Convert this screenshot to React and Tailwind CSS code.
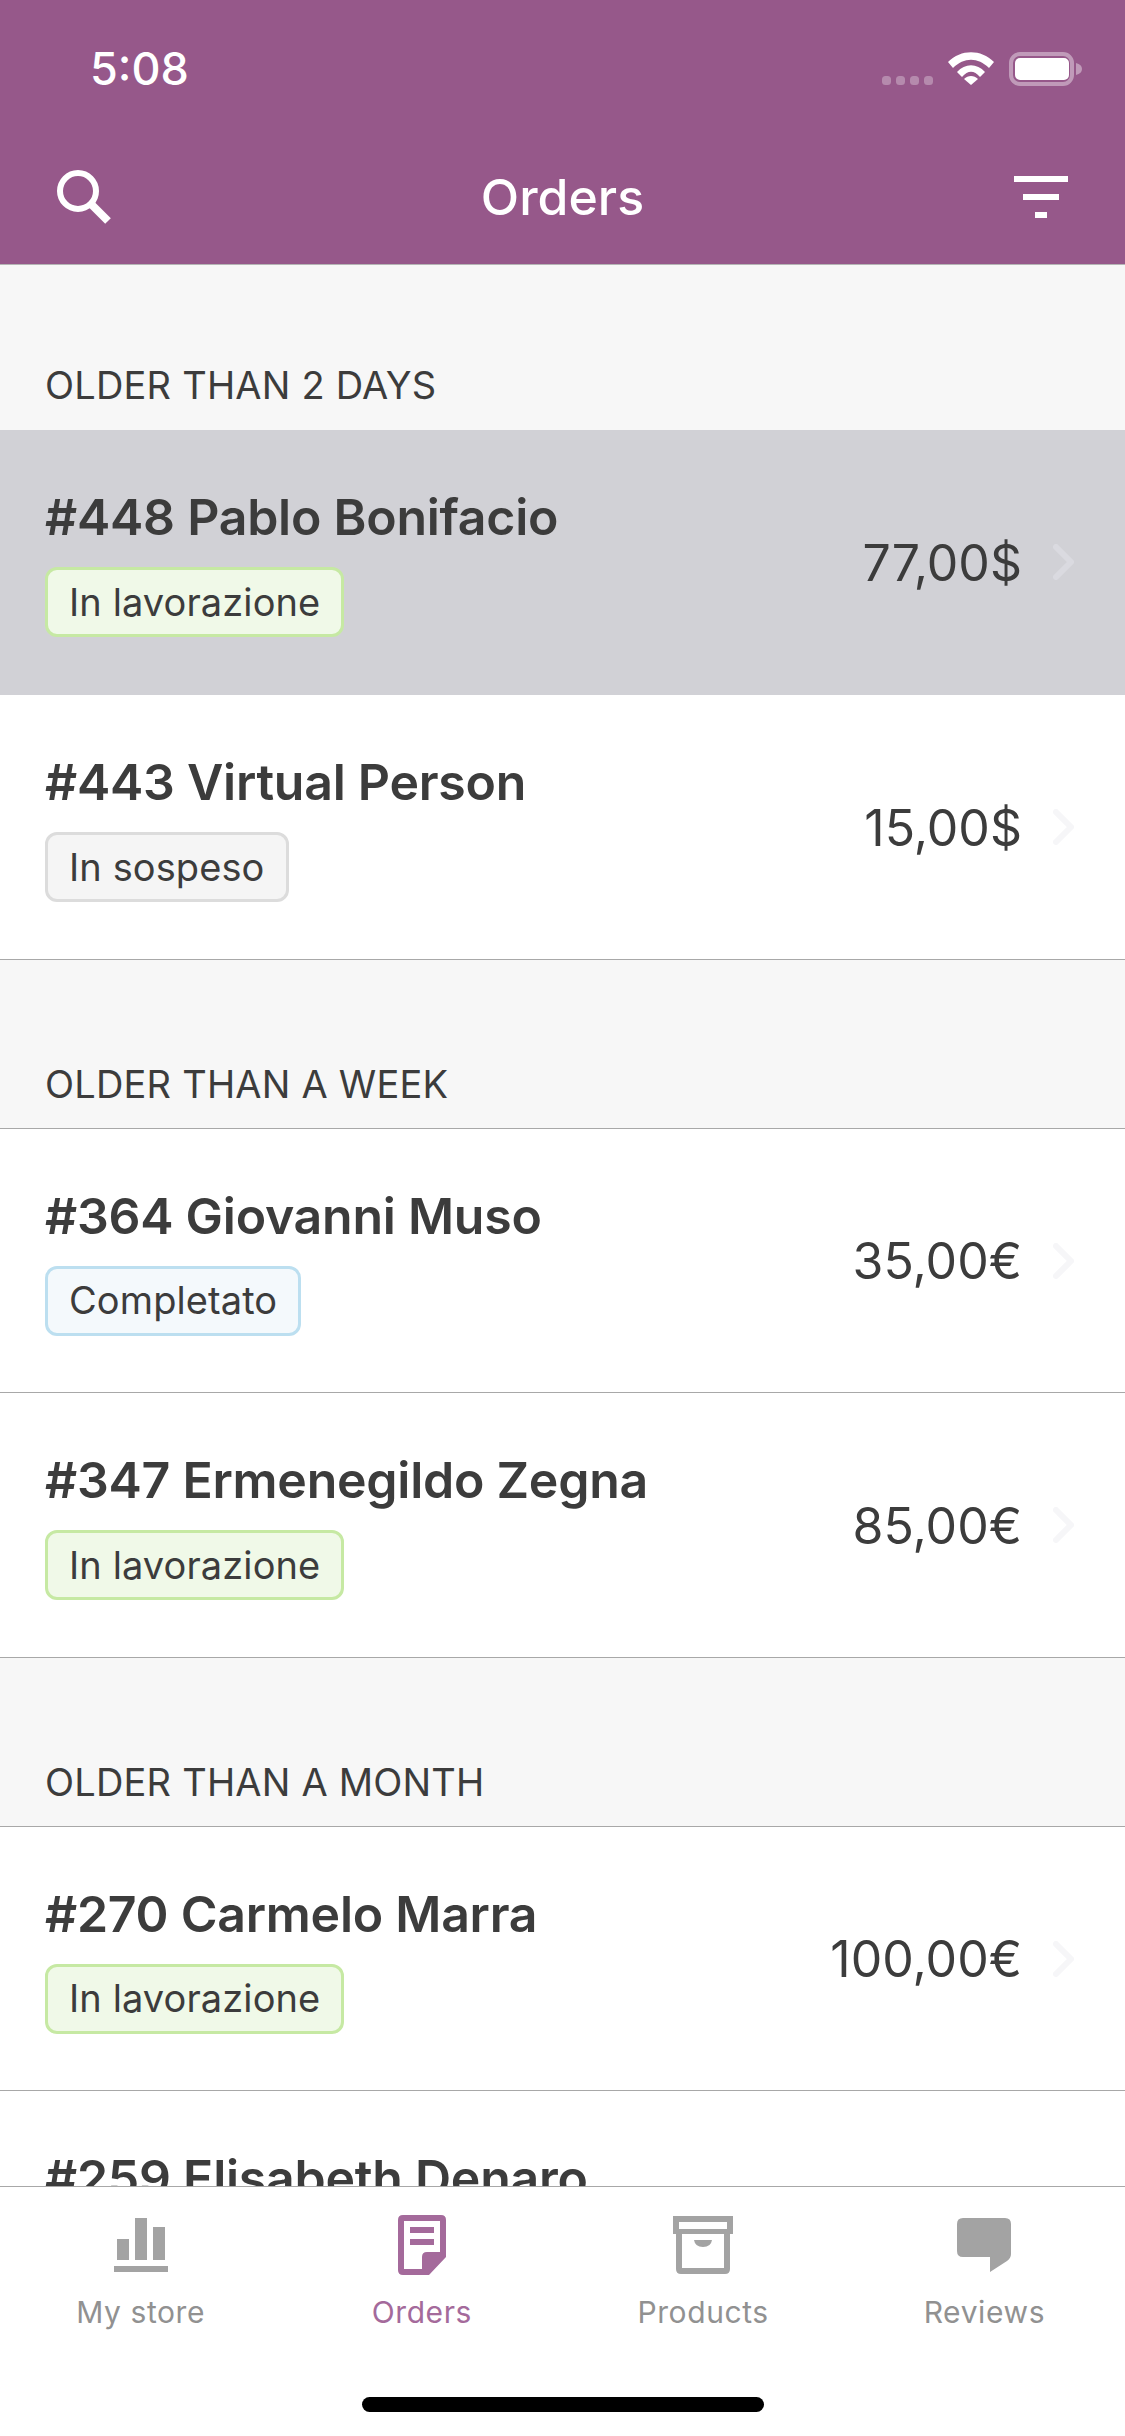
const font = { fontFamily: '"Inter", "Liberation Sans", sans-serif' };

const badgeStyles = {
  green: "bg-[#f0f9e8] border-[#c6e9a3]",
  gray: "bg-[#f5f5f5] border-[#dcdcdc]",
  blue: "bg-[#f4f9fc] border-[#bcdff0]",
};

function Chevron() {
  return (
    <svg width="21" height="36" viewBox="0 0 21 36" className="ml-[31px] shrink-0 text-[#e9e9f0] opacity-40">
      <path d="M3 3 L18 18 L3 33" fill="none" stroke="currentColor" strokeWidth="6" strokeLinecap="round" strokeLinejoin="round" />
    </svg>
  );
}

function Order({ title, badge, tone, price, highlight, short }) {
  return (
    <div className={`${short ? "h-[264px]" : "h-[265px]"} flex items-center pl-[45px] pr-[51px] border-b ${highlight ? "bg-[#d1d1d6] border-transparent" : "bg-white border-[#a8a8a8]"}`}>
      <div className="flex-1 min-w-0 flex flex-col items-start">
        <div className="text-[50px] leading-[60px] font-semibold text-[#3c3c3c] tracking-[-0.25px]">{title}</div>
        <div className={`mt-[20px] h-[70px] flex items-center px-[21px] rounded-[12px] border-[3px] text-[38px] tracking-[0.1px] text-[#3c3c3c] ${badgeStyles[tone]}`}>{badge}</div>
      </div>
      <div className="text-[50px] text-[#3c3c3c] mt-[2px]">{price}</div>
      <Chevron />
    </div>
  );
}

function Section({ label, children, first }) {
  return (
    <div>
      <div className={`bg-[#f7f7f7] px-[45px] flex items-end pb-[22px] border-b ${first ? "h-[165px] border-transparent" : "h-[169px] border-[#a8a8a8]"}`}>
        <span className="text-[38px] leading-[44px] tracking-[0.2px] text-[#3c3c3c] uppercase">{label}</span>
      </div>
      {children}
    </div>
  );
}

function Tab({ icon, label, active }) {
  return (
    <div className={`flex flex-col items-center ${active ? "text-[#a46a9b]" : "text-[#919191]"}`}>
      <div className="h-[64px] flex items-center justify-center">{icon}</div>
      <span className="mt-[17px] text-[30px] leading-[36px] tracking-[0.6px]">{label}</span>
    </div>
  );
}

export default function App() {
  return (
    <div className="w-[1125px] h-[2436px] flex flex-col bg-white overflow-hidden" style={font}>
      <header className="h-[265px] shrink-0 bg-[#96588a] border-b-[1px] border-[#b5b5b5] text-white flex flex-col">
        <div className="h-[132px] pl-[90px] pr-[43px] flex items-start justify-between pt-[44px]">
          <span className="text-[45px] leading-[50px] font-medium">5:08</span>
          <div className="flex items-start gap-[15px] mt-[8px]">
            <svg width="51" height="34" viewBox="0 0 51 34" className="opacity-30">
              {[0, 14, 28, 42].map((x) => (
                <rect key={x} x={x} y="24" width="9" height="9" rx="3.5" fill="white" />
              ))}
            </svg>
            <svg width="46" height="33" viewBox="0 0 46 33">
              <path d="M0 10 C13 -3 33 -3 46 10 L41 16 C30 5 16 5 5 16 Z" fill="white" />
              <path d="M9 20 C17 11 29 11 37 20 L32 25 C26 18 20 18 14 25 Z" fill="white" />
              <path d="M16 27 C20 23 26 23 30 27 L23 33 Z" fill="white" />
            </svg>
            <svg width="73" height="34" viewBox="0 0 73 34">
              <rect x="2" y="2" width="61" height="30" rx="9" fill="none" stroke="white" strokeOpacity="0.4" strokeWidth="4" />
              <rect x="6" y="6" width="54" height="22" rx="5" fill="white" />
              <path d="M67 11 C71 12 73 14 73 17 C73 20 71 22 67 23 Z" fill="white" fillOpacity="0.4" />
            </svg>
          </div>
        </div>
        <div className="relative flex-1 flex items-start justify-between pl-[56px] pr-[57px] pt-[38px]">
          <svg width="56" height="54" viewBox="0 0 56 54">
            <circle cx="22" cy="21" r="18" fill="none" stroke="white" strokeWidth="6" />
            <path d="M36 35 L52 51" stroke="white" strokeWidth="8" fill="none" />
          </svg>
          <span className="absolute left-0 right-0 top-[37px] text-center text-[50px] leading-[56px] font-medium">Orders</span>
          <svg width="54" height="42" viewBox="0 0 54 42" className="mt-[6px]">
            <rect x="0" y="0" width="54" height="6" fill="white" />
            <rect x="9" y="18" width="36" height="6" fill="white" />
            <rect x="21" y="36" width="12" height="6" fill="white" />
          </svg>
        </div>
      </header>

      <main className="flex-1 min-h-0 overflow-hidden bg-[#f7f7f7]">
        <Section label="Older than 2 days" first>
          <Order title="#448 Pablo Bonifacio" badge="In lavorazione" tone="green" price="77,00$" highlight />
          <Order title="#443 Virtual Person" badge="In sospeso" tone="gray" price="15,00$" />
        </Section>
        <Section label="Older than a week">
          <Order title="#364 Giovanni Muso" badge="Completato" tone="blue" price="35,00€" short />
          <Order title="#347 Ermenegildo Zegna" badge="In lavorazione" tone="green" price="85,00€" />
        </Section>
        <Section label="Older than a month">
          <Order title="#270 Carmelo Marra" badge="In lavorazione" tone="green" price="100,00€" short />
          <div className="bg-white pl-[45px] pt-[57px]">
            <div className="text-[50px] leading-[60px] font-semibold text-[#3c3c3c] tracking-[-0.25px]">#259 Elisabeth Denaro</div>
          </div>
        </Section>
      </main>

      <nav className="h-[250px] shrink-0 bg-white border-t-[1px] border-[#a8a8a8] flex flex-col">
        <div className="grid grid-cols-4 pt-[26px]">
          <Tab
            label="My store"
            icon={
              <svg width="54" height="54" viewBox="0 0 54 54" className="text-[#a3a3a3]" fill="currentColor">
                <rect x="3" y="21" width="12" height="21" />
                <rect x="21" y="0" width="12" height="42" />
                <rect x="39" y="9" width="12" height="33" />
                <rect x="0" y="48" width="54" height="6" />
              </svg>
            }
          />
          <Tab
            active
            label="Orders"
            icon={
              <svg width="48" height="60" viewBox="0 0 48 60">
                <path d="M5 0 H43 Q48 0 48 5 V42 L31 60 H5 Q0 60 0 55 V5 Q0 0 5 0 Z M6 6 V54 H24 V42 Q24 37 29 37 H42 V6 Z" fill="currentColor" fillRule="evenodd" />
                <rect x="12" y="12" width="24" height="6" fill="currentColor" />
                <rect x="12" y="24" width="24" height="6" fill="currentColor" />
              </svg>
            }
          />
          <Tab
            label="Products"
            icon={
              <svg width="60" height="58" viewBox="0 0 60 58" className="text-[#a3a3a3]">
                <path d="M0 0 H60 V18 H0 Z M6 6 V13 H54 V6 Z" fill="currentColor" fillRule="evenodd" />
                <path d="M3 18 H57 V53 Q57 58 52 58 H8 Q3 58 3 53 Z M9 18 V52 H51 V18 Z" fill="currentColor" fillRule="evenodd" />
                <path d="M21 24 H39 Q38 31 30 31 Q22 31 21 24 Z" fill="currentColor" />
              </svg>
            }
          />
          <Tab
            label="Reviews"
            icon={
              <svg width="54" height="54" viewBox="0 0 54 54" className="text-[#a3a3a3]">
                <path d="M6 0 H48 Q54 0 54 6 V36 Q54 40 50 43 L33 54 V39 H6 Q0 39 0 33 V6 Q0 0 6 0 Z" fill="currentColor" />
              </svg>
            }
          />
        </div>
        <div className="mt-auto mb-[24px] mx-auto w-[402px] h-[15px] rounded-full bg-black" />
      </nav>
    </div>
  );
}
